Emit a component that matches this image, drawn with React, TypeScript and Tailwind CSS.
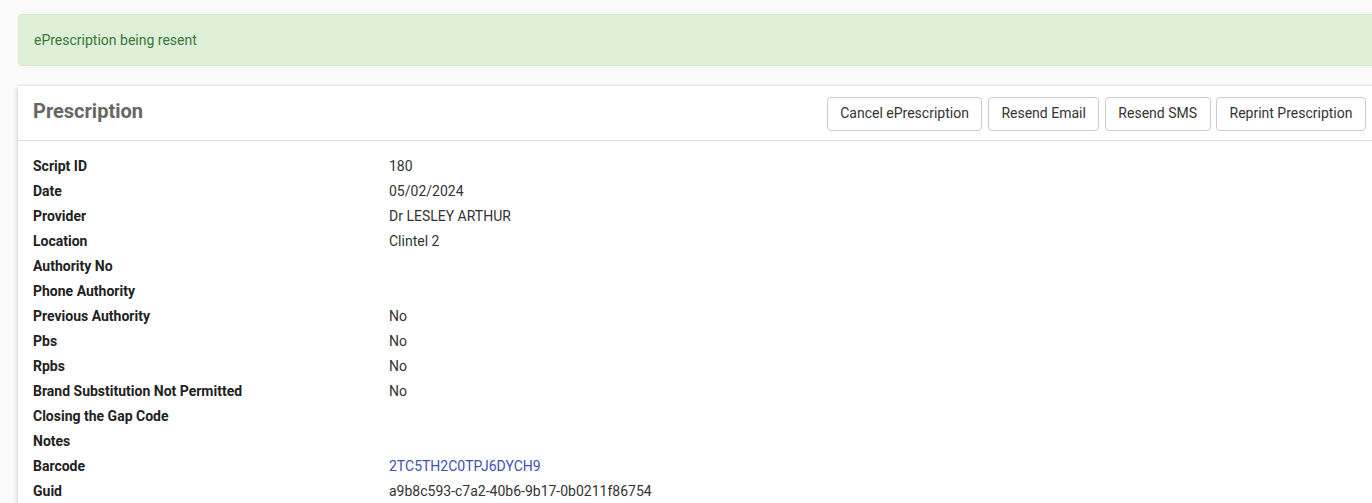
import React from "react";

const rows: [string, string, boolean?][] = [
  ["Script ID", "180"],
  ["Date", "05/02/2024"],
  ["Provider", "Dr LESLEY ARTHUR"],
  ["Location", "Clintel 2"],
  ["Authority No", ""],
  ["Phone Authority", ""],
  ["Previous Authority", "No"],
  ["Pbs", "No"],
  ["Rpbs", "No"],
  ["Brand Substitution Not Permitted", "No"],
  ["Closing the Gap Code", ""],
  ["Notes", ""],
  ["Barcode", "2TC5TH2C0TPJ6DYCH9", true],
  ["Guid", "a9b8c593-c7a2-40b6-9b17-0b0211f86754"],
];

const buttons = ["Cancel ePrescription", "Resend Email", "Resend SMS", "Reprint Prescription"];

export default function App() {
  return (
    <div
      className="w-screen h-[503px] overflow-hidden bg-[#fafafa] text-[14px] text-[#333]"
      style={{ fontFamily: "Roboto, 'Liberation Sans', sans-serif" }}
    >
      <div className="pl-[18px] pt-[14px] w-[1380px]">
        <div className="h-[52px] flex items-center px-[15px] bg-[#dff0d8] border border-[#d6e9c6] rounded-[4px] text-[#3c763d]">
          ePrescription being resent
        </div>
        <div className="mt-[20px] bg-white shadow-[0_1px_4px_rgba(0,0,0,0.25)] rounded-[2px]">
          <div className="h-[55px] flex items-center justify-between pl-[15px] pr-[14px] border-b border-[#ddd]">
            <h2 className="text-[20px] font-bold text-[#666] mb-[4px]">Prescription</h2>
            <div className="flex gap-[5.5px] pt-[1px]">
              {buttons.map((b) => (
                <button
                  key={b}
                  className="h-[34px] px-[12.5px] border border-[#ccc] rounded-[4px] bg-white text-[14px] text-[#333]"
                >
                  {b}
                </button>
              ))}
            </div>
          </div>
          <div className="pt-[13px] px-[15px] pb-[10px]">
            {rows.map(([label, value, link]) => (
              <div key={label} className="flex h-[25px] items-center">
                <div className="w-[356px] font-bold text-[#222]">{label}</div>
                <div className={link ? "text-[#3f51b5]" : "text-[#333]"}>{value}</div>
              </div>
            ))}
          </div>
        </div>
      </div>
    </div>
  );
}
